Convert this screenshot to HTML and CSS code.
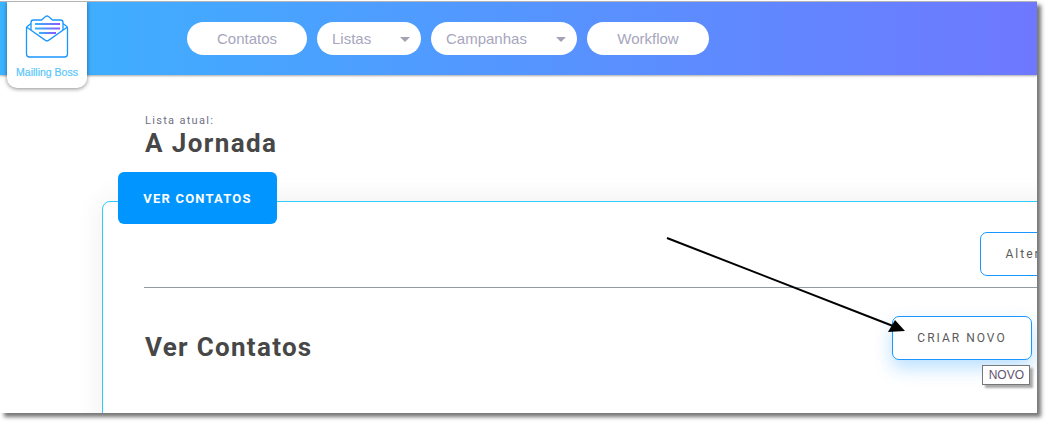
FILE: index.html
```html
<!DOCTYPE html>
<html lang="pt-BR">
<head>
<meta charset="UTF-8" />
<meta name="viewport" content="width=device-width, initial-scale=1" />
<title>Mailling Boss</title>
<link rel="stylesheet" href="styles.css">
</head>
<body>

<div class="shot">
  <div class="page">
    <header class="topbar">
      <a class="logo">
        <svg class="logo-icon" width="44" height="46" viewBox="0 0 44 46" fill="none">
          <defs>
            <linearGradient id="lines" x1="0" x2="1" y1="0" y2="0">
              <stop offset="0" stop-color="#2fb6ff" />
              <stop offset="1" stop-color="#8f57ff" />
            </linearGradient>
          </defs>
          <path d="M6 17V9.5Q6 7 8.5 7H16.5L20.5 3.6Q22 2.4 23.5 3.6L27.5 7H35.5Q38 7 38 9.5V17" stroke="#1a97ff" stroke-width="1.3" />
          <path d="M6 10.5L2.2 13.4Q1.5 14 1.5 15V41Q1.5 44 4.5 44H39.5Q42.5 44 42.5 41V15Q42.5 14 41.8 13.4L38 10.5" stroke="#1a97ff" stroke-width="1.3" />
          <path d="M1.8 14.2L20.5 27.4Q22 28.4 23.5 27.4L42.2 14.2" stroke="#1a97ff" stroke-width="1.3" />
          <rect x="10" y="10" width="25" height="2" fill="url(#lines)" />
          <rect x="10" y="14.5" width="25" height="2" fill="url(#lines)" />
          <rect x="14" y="19" width="17" height="2" fill="url(#lines)" />
        </svg>
        <span class="logo-name">Mailling Boss</span>
      </a>
      <nav class="menu">
        <a class="pill pill-contatos">Contatos</a>
        <a class="pill pill-select pill-listas">Listas</a>
        <a class="pill pill-select pill-campanhas">Campanhas</a>
        <a class="pill pill-workflow">Workflow</a>
      </nav>
    </header>

    <main class="content">
      <div class="current-list">
        <span class="current-label">Lista atual:</span>
        <h1 class="current-name">A Jornada</h1>
      </div>

      <div class="card-wrap">
        <a class="tab">VER CONTATOS</a>
        <section class="card">
          <div class="card-actions">
            <button class="btn btn-alter">Alterar</button>
          </div>
          <div class="card-head">
            <h2 class="card-title">Ver Contatos</h2>
            <div class="new-wrap">
              <button class="btn btn-new">CRIAR NOVO</button>
              <span class="tooltip">NOVO</span>
            </div>
          </div>
        </section>
      </div>
    </main>

    <!-- seta desenhada por cima do print -->
    <svg class="arrow" width="260" height="110" viewBox="0 0 260 110">
      <line x1="2" y1="2" x2="228" y2="90" stroke="#000" stroke-width="2" />
      <polygon points="240,95 223,96 230,84" fill="#000" />
    </svg>
  </div>
</div>

</body>
</html>
```

FILE: styles.css
```css
html, body {
  margin: 0;
  height: 100%;
  overflow: hidden;
  background: #fff;
}

body {
  font-family: "Liberation Sans", Arial, sans-serif;
}

/* moldura do print, com a sombra por fora */
.shot {
  width: 1037px;
  height: 411px;
  margin-top: 1px;
  border-top: 1px solid #b4b4b4;
  box-shadow: 4px 4px 4px #777;
}

.page {
  position: relative;
  height: 100%;
  overflow: hidden;
  background: #fff;
}

.topbar {
  display: flex;
  align-items: flex-start;
  height: 73px;
  padding-left: 7px;
  background: linear-gradient(90deg, #3bb3ff, #6e78ff);
  box-shadow: 0 1px 2px rgba(0, 0, 0, 0.35);
}

.logo {
  display: flex;
  flex-direction: column;
  align-items: center;
  width: 80px;
  height: 86px;
  padding-top: 11px;
  box-sizing: border-box;
  background: #fff;
  border-radius: 0 0 10px 10px;
  box-shadow: 0 1px 4px rgba(0, 0, 0, 0.45);
  position: relative;
  z-index: 2;
}

.logo-icon {
  display: block;
}

.logo-name {
  margin-top: 7px;
  font-size: 10.5px;
  color: #58c6fa;
  white-space: nowrap;
  -webkit-text-stroke: 0.2px #58c6fa;
}

.menu {
  display: flex;
  gap: 10px;
  margin: 20px 0 0 100px;
}

.pill {
  display: flex;
  align-items: center;
  height: 33px;
  box-sizing: border-box;
  background: #fff;
  border-radius: 17px;
  font-size: 15px;
  color: #a6a6bd;
}

.pill-contatos {
  width: 120px;
  justify-content: center;
}

.pill-workflow {
  width: 122px;
  justify-content: center;
}

.pill-select {
  position: relative;
  padding-left: 15px;
}

.pill-select::after {
  content: "";
  position: absolute;
  right: 11px;
  top: 15px;
  border-left: 5px solid transparent;
  border-right: 5px solid transparent;
  border-top: 5px solid #a3a3b5;
}

.pill-listas {
  width: 104px;
}

.pill-campanhas {
  width: 146px;
}

.content {
  padding-top: 39px;
}

.current-list {
  margin-left: 145px;
}

.current-label {
  display: block;
  font-family: Roboto, sans-serif;
  font-size: 11px;
  line-height: 13px;
  letter-spacing: 1.3px;
  color: #6f6f85;
}

.current-name {
  margin: 0;
  font-family: Roboto, sans-serif;
  font-size: 26px;
  line-height: 32px;
  font-weight: 700;
  letter-spacing: 1.4px;
  color: #474747;
}

.card-wrap {
  position: relative;
  margin: 13px 0 0 102px;
  padding-top: 29px;
}

.tab {
  position: absolute;
  top: 0;
  left: 16px;
  z-index: 1;
  display: flex;
  align-items: center;
  justify-content: center;
  width: 159px;
  height: 52px;
  background: #0095ff;
  border-radius: 6px;
  font-family: Roboto, sans-serif;
  font-size: 13px;
  font-weight: 700;
  letter-spacing: 1.2px;
  color: #fff;
}

.card {
  width: 1000px;
  height: 300px;
  box-sizing: border-box;
  padding: 30px 69px 0 41px;
  background: #fff;
  border: 1px solid #2fcbff;
  border-radius: 8px;
  box-shadow: 0 0 30px rgba(0, 0, 0, 0.07);
}

.card-actions {
  display: flex;
  justify-content: flex-end;
  height: 55px;
  margin-right: -49px;
  border-bottom: 1px solid #8f9aa3;
}

.card-head {
  display: flex;
  justify-content: space-between;
  align-items: flex-start;
  padding-top: 28px;
}

.card-title {
  margin: 15px 0 0 1px;
  font-family: Roboto, sans-serif;
  font-size: 26px;
  line-height: 32px;
  font-weight: 700;
  letter-spacing: 1.3px;
  color: #474747;
}

.btn {
  height: 44px;
  padding: 0 25px;
  background: #fff;
  border: 1px solid #1a97ff;
  border-radius: 7px;
  font-family: Roboto, sans-serif;
  font-size: 12px;
  letter-spacing: 2px;
  color: #5a5a5a;
}

.btn-new {
  display: block;
  width: 140px;
  padding: 0;
  box-shadow: 0 8px 18px rgba(26, 151, 255, 0.3);
}

.new-wrap {
  position: relative;
}

.tooltip {
  position: absolute;
  top: 49px;
  right: 2px;
  z-index: 3;
  padding: 2px 5px 1px 6px;
  background: #fff;
  border: 1px solid #777;
  box-shadow: 3px 3px 2px #aaa;
  font-size: 12px;
  line-height: 15px;
  color: #5f5470;
}

.arrow {
  position: absolute;
  left: 665px;
  top: 234px;
  z-index: 4;
}
```
